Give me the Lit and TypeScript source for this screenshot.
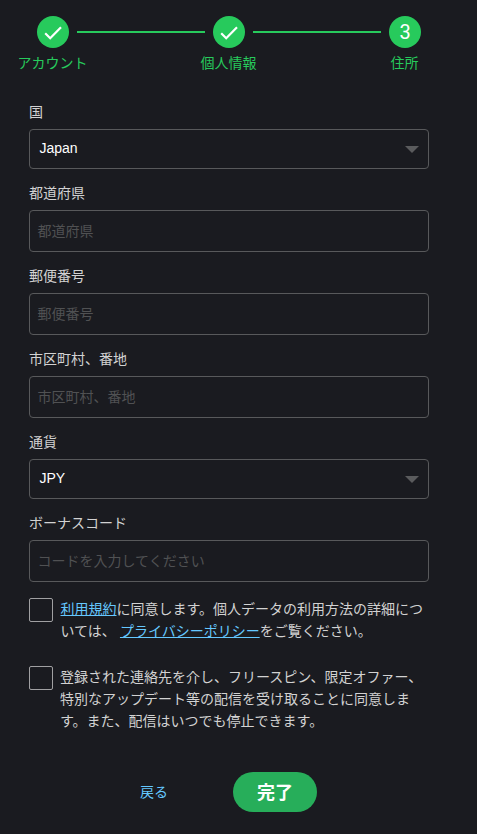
import { LitElement, html, css } from "lit";
import { customElement } from "lit/decorators.js";

const check = html`<svg width="18" height="14" viewBox="0 0 18 14" fill="none">
  <path d="M1.2 7.2 L6.2 12.2 L17 1.2" stroke="#fff" stroke-width="2.2" />
</svg>`;
const arrow = html`<svg width="14" height="7" viewBox="0 0 14 7"><path d="M0 0H14L7 7Z" fill="#5a5b5d" /></svg>`;

interface Field {
  label: string;
  value?: string;
  placeholder?: string;
}

const fields: Field[] = [
  { label: "国", value: "Japan" },
  { label: "都道府県", placeholder: "都道府県" },
  { label: "郵便番号", placeholder: "郵便番号" },
  { label: "市区町村、番地", placeholder: "市区町村、番地" },
  { label: "通貨", value: "JPY" },
  { label: "ボーナスコード", placeholder: "コードを入力してください" },
];

@customElement("app-root")
export class AppRoot extends LitElement {
  static styles = css`
    :host {
      display: block;
      box-sizing: border-box;
      height: 834px;
      overflow: hidden;
      background: #1a1b20;
      color: #d2d2d2;
      font: 14px/22px "Noto Sans CJK JP", sans-serif;
    }
    * { box-sizing: border-box; }
    svg { display: block; }
    .steps {
      display: flex;
      height: 88px;
      padding: 16px 37px 0;
    }
    .step {
      display: flex;
      flex-direction: column;
      align-items: center;
      width: 32px;
      color: #27ca5c;
      white-space: nowrap;
    }
    .dot {
      display: flex;
      align-items: center;
      justify-content: center;
      width: 32px;
      height: 32px;
      flex: none;
      border-radius: 50%;
      background: #27ca5c;
      color: #fff;
      font: 20px/32px Roboto, sans-serif;
    }
    .dot svg { margin-top: 2px; }
    .step-label { margin: 3px 1px 0 0; }
    .line {
      width: 128px;
      height: 2px;
      margin: 15px 8px 0;
      background: #27ca5c;
    }
    .form { width: 400px; margin-left: 29px; }
    .label {
      height: 41px;
      padding-top: 11px;
      line-height: 24px;
    }
    .box {
      display: flex;
      align-items: center;
      justify-content: space-between;
      height: 42px;
      padding: 0 8px 2px 7.5px;
      border: 1px solid #58595b;
      border-radius: 4px;
      color: #505153;
    }
    .select {
      height: 40px;
      padding: 0 9px 0 9.5px;
      color: #fff;
      font: 14px/20px "Liberation Sans", sans-serif;
    }
    .select span { padding-bottom: 2px; }
    .consent {
      display: flex;
      gap: 7px;
      height: 44px;
      margin-top: 16px;
    }
    .consent + .consent { height: 66px; margin-top: 24px; }
    .tick {
      flex: none;
      width: 24px;
      height: 24px;
      border: 1px solid #a0a0a2;
      border-radius: 2px;
    }
    .text { margin-top: -1px; white-space: nowrap; }
    .terms { padding-left: 0.5px; word-spacing: 1px; }
    a { color: #65c8ff; }
    .actions {
      display: flex;
      align-items: center;
      margin-top: 40px;
      padding-left: 111px;
      gap: 65px;
    }
    .back { padding-bottom: 2px; text-decoration: none; }
    .done {
      width: 84px;
      height: 40px;
      padding: 0 0 2px;
      border: 0;
      border-radius: 20px;
      background: #27ae5a;
      color: #fff;
      font: bold 18px/38px "Noto Sans CJK JP", sans-serif;
    }
  `;

  private step(mark: unknown, label: string) {
    return html`<div class="step"><div class="dot">${mark}</div><div class="step-label">${label}</div></div>`;
  }

  private field(f: Field) {
    return html`<div class="label">${f.label}</div>
      ${f.value
        ? html`<div class="box select"><span>${f.value}</span>${arrow}</div>`
        : html`<div class="box">${f.placeholder}</div>`}`;
  }

  render() {
    return html`
      <div class="steps">
        ${this.step(check, "アカウント")}
        <div class="line"></div>
        ${this.step(check, "個人情報")}
        <div class="line"></div>
        ${this.step("3", "住所")}
      </div>
      <div class="form">
        ${fields.map((f) => this.field(f))}
        <div class="consent">
          <span class="tick"></span>
          <div class="text terms"><a href="#">利用規約</a>に同意します。個人データの利用方法の詳細につ<br />いては、 <a href="#">プライバシーポリシー</a>をご覧ください。</div>
        </div>
        <div class="consent">
          <span class="tick"></span>
          <div class="text">登録された連絡先を介し、フリースピン、限定オファー、<br />特別なアップデート等の配信を受け取ることに同意しま<br />す。また、配信はいつでも停止できます。</div>
        </div>
        <div class="actions">
          <a class="back" href="#">戻る</a>
          <button class="done">完了</button>
        </div>
      </div>
    `;
  }
}
